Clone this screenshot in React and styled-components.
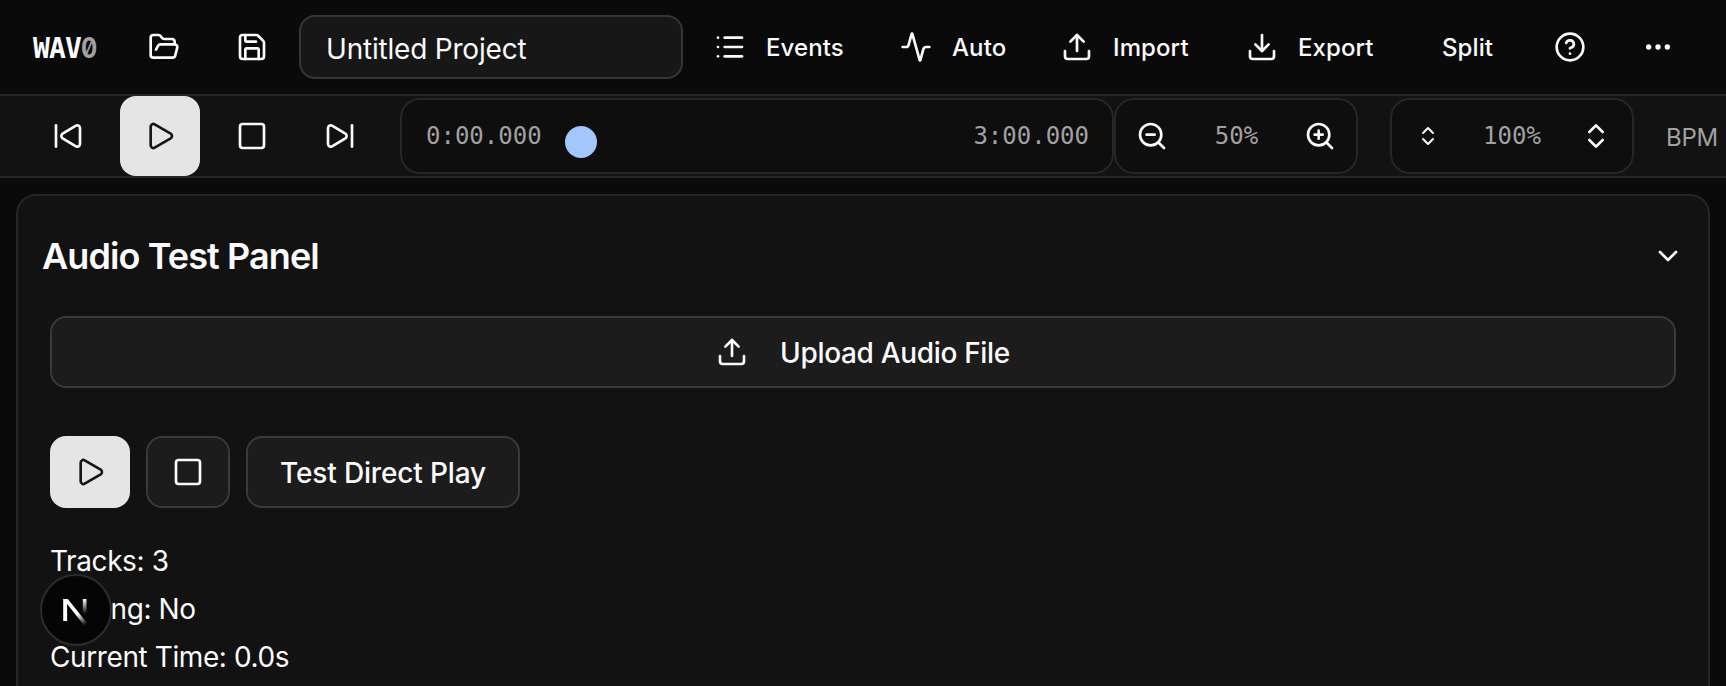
import React from "react";
import styled, { createGlobalStyle, css } from "styled-components";
import {
  FolderOpen, Save, List, Activity, Upload, Download, CircleHelp, Ellipsis,
  SkipBack, SkipForward, Play, Square, ZoomIn, ZoomOut, ChevronsUpDown, ChevronDown,
} from "lucide-react";

const Global = createGlobalStyle`
  *, *::before, *::after { box-sizing: border-box; }
  html, body { margin: 0; height: 100%; overflow: hidden; background: #0a0a0a; }
  body { font-family: Inter, sans-serif; color: #fafafa; -webkit-font-smoothing: antialiased; }
  button, input { font: inherit; color: inherit; margin: 0; }
  svg { flex: none; }
`;

const Screen = styled.div`
  height: 686px;
  display: flex;
  flex-direction: column;
  overflow: hidden;
`;

const Header = styled.header`
  flex: none;
  display: flex;
  align-items: center;
  height: 96px;
  padding: 0 20px 0 33px;
  border-bottom: 2px solid #262626;
`;

const Logo = styled.div`
  flex: none;
  width: 91px;
  padding-top: 2px;
  font: 700 28px/40px "DejaVu Sans Mono", monospace;
  letter-spacing: -0.9px;
  white-space: nowrap;
`;

const LogoZero = styled.span`
  display: inline-block;
  font-family: Inter, sans-serif;
  font-feature-settings: "zero";
  color: #a1a1a1;
  transform: scaleX(0.86);
  transform-origin: left;
`;

const IconButton = styled.button`
  flex: none;
  display: flex;
  align-items: center;
  justify-content: center;
  width: ${(p) => p.$w || 80}px;
  height: ${(p) => p.$h || 80}px;
  padding: 0;
  border: 0;
  border-radius: 16px;
  background: none;
  ${(p) => p.$primary && css`background: #e5e5e5; color: #171717;`}
  ${(p) => p.$outline && css`background: #1c1c1c; border: 2px solid #3a3a3a;`}
`;

const HeaderIcons = styled.div`
  display: flex;
  gap: 8px;
  margin-right: 7px;
`;

const NameInput = styled.input`
  flex: none;
  width: 384px;
  height: 64px;
  padding: 3px 25px 0;
  border: 2px solid #363636;
  border-radius: 16px;
  background: #171717;
  font-size: 28px;
  letter-spacing: -0.2px;
  outline: none;
`;

const Menu = styled.nav`
  display: flex;
  align-items: center;
  margin-left: 7px;
`;

const MenuButton = styled.button`
  flex: none;
  display: flex;
  align-items: center;
  gap: 20px;
  width: ${(p) => p.$w}px;
  height: 64px;
  padding: 0 0 0 24px;
  border: 0;
  background: none;
  font-size: 24px;
  font-weight: 500;
  letter-spacing: 0.1px;
  white-space: nowrap;
`;

const Transport = styled.section`
  flex: none;
  display: flex;
  align-items: center;
  height: 82px;
  padding-left: 28px;
  border-bottom: 2px solid #262626;
  background: #121212;
  overflow: hidden;
`;

const TransportButtons = styled.div`
  flex: none;
  display: flex;
  width: 372px;
  gap: 12px;
`;

const Box = styled.div`
  flex: none;
  display: flex;
  align-items: center;
  justify-content: space-between;
  width: ${(p) => p.$w}px;
  height: 76px;
  margin-right: ${(p) => p.$mr || 0}px;
  padding: ${(p) => p.$pad || "0 20px"};
  border: 2px solid #262626;
  border-radius: 20px;
  background: #0e0e0e;
`;

const Mono = styled.span`
  padding-left: ${(p) => p.$shift || 0}px;
  font: 400 24px/32px "DejaVu Sans Mono", monospace;
  color: #a1a1a1;
  white-space: nowrap;
`;

const Seek = styled.div`
  flex: 1;
  height: 32px;
  margin: 11px 24px 0 23px;
`;

const Thumb = styled.div`
  width: 32px;
  height: 32px;
  border-radius: 50%;
  background: #a3c6fc;
`;

const Label = styled.span`
  padding-top: 2px;
  font-size: 24px;
  letter-spacing: -0.3px;
  color: #a1a1a1;
`;

const Panel = styled.main`
  flex: none;
  height: 560px;
  margin: 16px 16px 0;
  padding: 30px 32px;
  border: 2px solid #262626;
  border-radius: 20px;
  background: #121212;
`;

const PanelHead = styled.div`
  display: flex;
  align-items: center;
  justify-content: space-between;
  height: 60px;
  margin: 0 -8px 30px;
`;

const PanelTitle = styled.h2`
  margin: 0;
  font-size: 36px;
  font-weight: 600;
  letter-spacing: -0.9px;
`;

const OutlineButton = styled.button`
  display: flex;
  align-items: center;
  justify-content: center;
  gap: 32px;
  width: ${(p) => p.$w || "100%"};
  height: 72px;
  border: 2px solid #3a3a3a;
  border-radius: 16px;
  background: #1c1c1c;
  font-size: 28px;
  font-weight: 500;
  letter-spacing: ${(p) => p.$track || "-0.33px"};
`;

const ButtonText = styled.span`
  padding-top: 1px;
`;

const Row = styled.div`
  display: flex;
  gap: 16px;
  margin: 48px 0 29px;
`;

const Stat = styled.div`
  font-size: 28px;
  line-height: 48px;
  letter-spacing: -0.4px;
`;

const Badge = styled.div`
  position: fixed;
  left: 40px;
  top: 574px;
  display: flex;
  align-items: center;
  justify-content: center;
  width: 72px;
  height: 72px;
  border: 2px solid #2c2c2c;
  border-radius: 50%;
  background: #050505;
`;

const NextMark = () => (
  <svg width="40" height="40" viewBox="0 0 40 40" fill="none">
    <defs>
      <linearGradient id="diag" x1="23" y1="23" x2="31" y2="34" gradientUnits="userSpaceOnUse">
        <stop stopColor="#fff" /><stop offset="1" stopColor="#fff" stopOpacity="0" />
      </linearGradient>
      <linearGradient id="stem" x1="28" y1="9" x2="28" y2="24" gradientUnits="userSpaceOnUse">
        <stop stopColor="#fff" /><stop offset="1" stopColor="#fff" stopOpacity="0" />
      </linearGradient>
    </defs>
    <path d="M7.2 9h3.9v22H7.2z" fill="#fff" />
    <path d="M7.2 9h4.6L32 34.2a18 18 0 0 1-3 2.2L7.2 9z" fill="url(#diag)" />
    <path d="M26.8 9h3.7v16h-3.7z" fill="url(#stem)" />
  </svg>
);

export default function App() {
  return (
    <Screen>
      <Global />
      <Header>
        <Logo>WAV<LogoZero>0</LogoZero></Logo>
        <HeaderIcons>
          <IconButton><FolderOpen size={32} /></IconButton>
          <IconButton><Save size={32} /></IconButton>
        </HeaderIcons>
        <NameInput defaultValue="Untitled Project" />
        <Menu>
          <MenuButton $w={186}><List size={32} />Events</MenuButton>
          <MenuButton $w={161}><Activity size={32} />Auto</MenuButton>
          <MenuButton $w={185}><Upload size={32} />Import</MenuButton>
          <MenuButton $w={196}><Download size={32} />Export</MenuButton>
          <MenuButton $w={112}>Split</MenuButton>
          <IconButton><CircleHelp size={32} /></IconButton>
          <IconButton $w={96}><Ellipsis size={32} /></IconButton>
        </Menu>
      </Header>
      <Transport>
        <TransportButtons>
          <IconButton><SkipBack size={32} /></IconButton>
          <IconButton $primary><Play size={32} /></IconButton>
          <IconButton><Square size={32} /></IconButton>
          <IconButton $w={72}><SkipForward size={32} /></IconButton>
        </TransportButtons>
        <Box $w={714} $pad="0 23px">
          <Mono $shift={1}>0:00.000</Mono>
          <Seek><Thumb /></Seek>
          <Mono>3:00.000</Mono>
        </Box>
        <Box $w={244} $mr={32}>
          <ZoomOut size={32} /><Mono $shift={1}>50%</Mono><ZoomIn size={32} />
        </Box>
        <Box $w={244} $mr={32} $pad="0 20px 0 24px">
          <ChevronsUpDown size={24} /><Mono $shift={4}>100%</Mono><ChevronsUpDown size={32} />
        </Box>
        <Label>BPM</Label>
      </Transport>
      <Panel>
        <PanelHead>
          <PanelTitle>Audio Test Panel</PanelTitle>
          <ChevronDown size={32} />
        </PanelHead>
        <OutlineButton><Upload size={32} /><ButtonText>Upload Audio File</ButtonText></OutlineButton>
        <Row>
          <IconButton $primary $h={72}><Play size={32} /></IconButton>
          <IconButton $outline $w={84} $h={72}><Square size={32} /></IconButton>
          <OutlineButton $w="274px" $track="-0.15px"><ButtonText>Test Direct Play</ButtonText></OutlineButton>
        </Row>
        <Stat>Tracks: 3</Stat>
        <Stat>Playing: No</Stat>
        <Stat>Current Time: 0.0s</Stat>
      </Panel>
      <Badge><NextMark /></Badge>
    </Screen>
  );
}
